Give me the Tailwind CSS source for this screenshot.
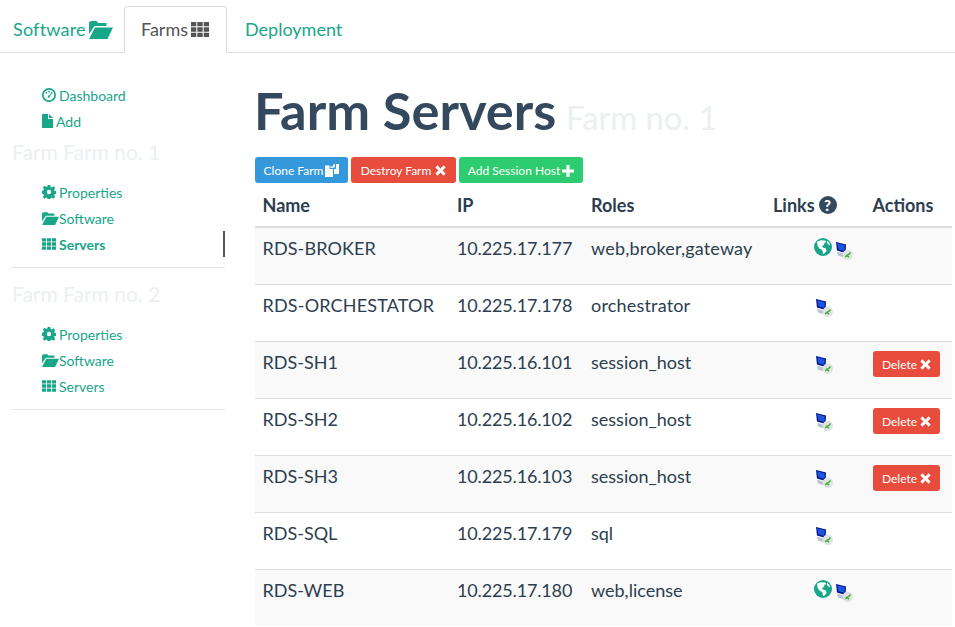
<!DOCTYPE html>
<html lang="en">
<head>
<meta charset="UTF-8">
<title>Farm Servers</title>
<script src="https://cdn.jsdelivr.net/npm/@tailwindcss/browser@4"></script>
</head>
<body class="bg-white font-['Lato',sans-serif] text-[18px] text-[#2c3e50] w-[955px] h-[627px] overflow-hidden">
<svg class="hidden">
  <symbol id="folder" viewBox="0 0 24 18"><path d="M2.500 0h5l1.500 2h8.500v3H5.500L0 13V2.500A2.500 2.500 0 0 1 2.500 0zM6 6.500h18L18.500 18H0z"/></symbol>
  <symbol id="grid" viewBox="0 0 18 15"><path d="M0 0h5.300v4.300H0zM6.350 0h5.300v4.300h-5.300zM12.700 0H18v4.300h-5.300zM0 5.350h5.300v4.300H0zM6.350 5.350h5.300v4.300h-5.300zM12.700 5.350H18v4.300h-5.300zM0 10.700h5.300V15H0zM6.350 10.700h5.300V15h-5.300zM12.700 10.700H18V15h-5.300z"/></symbol>
  <symbol id="times" viewBox="0 0 12 12"><path d="M2.600.4 6 3.800 9.400.4l2.200 2.200L8.200 6l3.400 3.400-2.200 2.200L6 8.200l-3.400 3.400-2.200-2.200L3.800 6 .4 2.600z"/></symbol>
  <symbol id="plus" viewBox="0 0 12 12"><path d="M4.400 0h3.200v4.400H12v3.200H7.600V12H4.400V7.600H0V4.400h4.400z"/></symbol>
  <symbol id="copy" viewBox="0 0 14 13"><path d="M0 1.500h4.500v3.500H8v8H0zM5.500 1.500 8 4H5.500zM9 0h1v3.500H7.500V2zM11 0h3v10H9V5h2z"/></symbol>
  <symbol id="file" viewBox="0 0 11 14"><path d="M0 0h6v5h5v9H0zM7 0l4 4H7z"/></symbol>
  <symbol id="gear" viewBox="0 0 14 14"><path fill-rule="evenodd" d="M5.700 0h2.600l.4 2 1 .4 1.700-1.100 1.800 1.800-1.100 1.700.4 1 2 .4v2.600l-2 .4-.4 1 1.100 1.700-1.800 1.800-1.700-1.100-1 .4-.4 1.800H5.700l-.4-1.800-1-.4-1.700 1.100-1.800-1.800 1.100-1.700-.4-1-1.500-.4V5.700l1.500-.4.4-1-1.100-1.700 1.800-1.800 1.700 1.100 1-.4zM7 4.800a2.200 2.200 0 1 0 0 4.400 2.200 2.200 0 0 0 0-4.400z"/></symbol>
  <symbol id="gauge" viewBox="0 0 14 14"><path fill-rule="evenodd" d="M7 0a7 7 0 1 1 0 14A7 7 0 0 1 7 0zm0 1.700a5.300 5.300 0 1 0 0 10.600A5.300 5.300 0 0 0 7 1.700z"/><circle cx="7" cy="3.600" r=".9"/><circle cx="4.300" cy="4.800" r=".9"/><circle cx="9.700" cy="4.800" r=".9"/><path d="M8.800 5.400l.7.500L7.800 8.200a1.100 1.100 0 1 1-.8-.6z"/></symbol>
  <symbol id="globe" viewBox="0 0 18 18"><circle cx="9" cy="9" r="9" fill="#18a689"/><path fill="#fff" d="M3 3.500 7 2.200l4 .3 1.500 1.500-2 .7-.5 2-2 1.500L9 9.500l3 1 .5 2.500-2.500 3-1-.5-.7-3.500-3-1.500L3.500 7.500zM13 2.800l2.500 2.200.6 2.500-1.600-1-1.500-1.500z"/></symbol>
  <symbol id="rdp" viewBox="0 0 18 18">
    <path fill="#b9c2cf" d="M2 9.500 9 12 9.500 15.500 3 13.500z"/>
    <path fill="#00108c" d="M1 0 11 2.500 10.500 11 2 8.500z"/>
    <path fill="#1f55dd" d="M2.200 1.200 9.800 3.200 9.400 9 3.200 7.200z"/>
    <circle cx="12.800" cy="12.800" r="5.200" fill="#dfe3e3"/>
    <path fill="none" stroke="#3fae2a" stroke-width="1.500" d="M10.300 15 12.600 12.600M15.500 10.500 13.200 13M14 15.200 12 13.500"/>
  </symbol>
</svg>

<nav class="h-[53px] pt-[6px] border-b border-[#ddd] flex text-[#18a689]">
  <a class="h-[47px] w-[124px] pl-[13px] flex items-center gap-[3px] tracking-[0.2px]">Software <svg class="w-[24px] h-[18px] fill-[#18a689]"><use href="#folder"/></svg></a>
  <a class="h-[47px] w-[103px] pl-[16px] bg-white border border-[#ddd] border-b-white rounded-t-[4px] flex items-center gap-[3px] text-[#555]">Farms <svg class="w-[18px] h-[15px] fill-[#555]"><use href="#grid"/></svg></a>
  <a class="h-[47px] pl-[18px] flex items-center">Deployment</a>
</nav>

<div class="flex">
  <aside class="w-[213px] ml-[12px] mt-[29px] text-[14px] text-[#18a689]">
    <ul class="pl-[30px]">
      <li class="h-[26px] flex items-center gap-[3px]"><svg class="w-[14px] h-[14px] fill-[#18a689]"><use href="#gauge"/></svg>Dashboard</li>
      <li class="h-[26px] flex items-center gap-[3px]"><svg class="w-[11px] h-[14px] fill-[#18a689]"><use href="#file"/></svg>Add</li>
    </ul>
    <h3 class="text-[21px] leading-[23px] text-[#ecf0f1] mt-[6px] mb-[16px]">Farm Farm no. 1</h3>
    <ul class="pb-[10px] border-b border-[#e5e5e5]">
      <li class="h-[26px] pl-[30px] flex items-center gap-[3px]"><svg class="w-[14px] h-[14px] fill-[#18a689]"><use href="#gear"/></svg>Properties</li>
      <li class="h-[26px] pl-[30px] flex items-center"><svg class="w-[17px] h-[13px] fill-[#18a689]"><use href="#folder"/></svg>Software</li>
      <li class="h-[26px] pl-[30px] flex items-center gap-[3px] font-bold border-r-2 border-[#555]"><svg class="w-[14px] h-[12px] fill-[#18a689]"><use href="#grid"/></svg>Servers</li>
    </ul>
    <h3 class="text-[21px] leading-[23px] text-[#ecf0f1] mt-[14px] mb-[16px]">Farm Farm no. 2</h3>
    <ul class="pb-[10px] border-b border-[#e5e5e5]">
      <li class="h-[26px] pl-[30px] flex items-center gap-[3px]"><svg class="w-[14px] h-[14px] fill-[#18a689]"><use href="#gear"/></svg>Properties</li>
      <li class="h-[26px] pl-[30px] flex items-center"><svg class="w-[17px] h-[13px] fill-[#18a689]"><use href="#folder"/></svg>Software</li>
      <li class="h-[26px] pl-[30px] flex items-center gap-[3px]"><svg class="w-[14px] h-[12px] fill-[#18a689]"><use href="#grid"/></svg>Servers</li>
    </ul>
  </aside>

  <main class="w-[697px] ml-[30px]">
    <h1 class="mt-[27px] -ml-[1px] h-[60px] leading-[60px] text-[52.4px] font-bold text-[#34495e] whitespace-nowrap">Farm Servers <small class="-ml-[3px] text-[32.7px] font-normal text-[#ecf0f1]">Farm no. 1</small></h1>
    <div class="mt-[17px] flex gap-[3px] text-[12px] text-white">
      <button class="h-[26px] w-[93px] pt-[1px] bg-[#3498db] rounded-[3px] flex items-center justify-center gap-[2px]">Clone Farm <svg class="w-[14px] h-[13px] fill-white"><use href="#copy"/></svg></button>
      <button class="h-[26px] w-[105px] pt-[1px] bg-[#e74c3c] rounded-[3px] flex items-center justify-center gap-[4px]">Destroy Farm <svg class="w-[11px] h-[11px] fill-white"><use href="#times"/></svg></button>
      <button class="h-[26px] w-[124px] pt-[1px] bg-[#2ecc71] rounded-[3px] flex items-center justify-center gap-[2px]">Add Session Host <svg class="w-[12px] h-[12px] fill-white"><use href="#plus"/></svg></button>
    </div>
    <table class="mt-[7px] w-[697px] table-fixed border-collapse text-left">
      <colgroup><col class="w-[194px]"><col class="w-[134px]"><col class="w-[182px]"><col class="w-[100px]"><col class="w-[87px]"></colgroup>
      <thead>
        <tr class="h-[37px] border-b-2 border-[#ddd]">
          <th class="pl-[7.5px] pb-[6px] font-bold">Name</th><th class="pl-[8px] pb-[6px] font-bold">IP</th><th class="pl-[8px] pb-[6px] font-bold">Roles</th>
          <th class="pl-[8px] pb-[6px] font-bold"><span class="flex items-center gap-[4px]">Links <span class="w-[18px] h-[18px] rounded-full bg-[#34495e] text-white text-[15px] font-black leading-[18px] text-center">?</span></span></th>
          <th class="pl-[7.5px] pb-[6px] font-bold">Actions</th>
        </tr>
      </thead>
      <tbody>
        <tr class="h-[57px] border-b border-[#ddd] bg-[#f9f9f9]">
          <td class="pl-[7.5px] pb-[14px] tracking-[0.12px]">RDS-BROKER</td><td class="pl-[8px] pb-[14px] tracking-[-0.15px]">10.225.17.177</td><td class="pl-[8px] pb-[14px] tracking-[0.18px]">web,broker,gateway</td>
          <td class="pb-[18px]"><span class="flex items-center pl-[49px] gap-[3px]"><svg class="w-[18px] h-[18px]"><use href="#globe"/></svg><svg class="w-[18px] h-[18px] mt-[8px]"><use href="#rdp"/></svg></span></td><td></td>
        </tr>
        <tr class="h-[57px] border-b border-[#ddd]">
          <td class="pl-[7.5px] pb-[14px] tracking-[0.18px]">RDS-ORCHESTATOR</td><td class="pl-[8px] pb-[14px] tracking-[-0.15px]">10.225.17.178</td><td class="pl-[8px] pb-[14px] tracking-[0.18px]">orchestrator</td>
          <td class="pb-[18px]"><span class="flex items-center pl-[50px]"><svg class="w-[18px] h-[18px] mt-[8px]"><use href="#rdp"/></svg></span></td><td></td>
        </tr>
        <tr class="h-[57px] border-b border-[#ddd] bg-[#f9f9f9]">
          <td class="pl-[7.5px] pb-[14px]">RDS-SH1</td><td class="pl-[8px] pb-[14px] tracking-[-0.15px]">10.225.16.101</td><td class="pl-[8px] pb-[14px]">session_host</td>
          <td class="pb-[18px]"><span class="flex items-center pl-[50px]"><svg class="w-[18px] h-[18px] mt-[8px]"><use href="#rdp"/></svg></span></td>
          <td class="pl-[8px] pb-[12px]"><button class="h-[26px] w-[67px] pt-[2px] bg-[#e74c3c] rounded-[3px] text-white text-[12px] flex items-center justify-center gap-[3px]">Delete <svg class="w-[11px] h-[11px] fill-white"><use href="#times"/></svg></button></td>
        </tr>
        <tr class="h-[57px] border-b border-[#ddd]">
          <td class="pl-[7.5px] pb-[14px]">RDS-SH2</td><td class="pl-[8px] pb-[14px] tracking-[-0.15px]">10.225.16.102</td><td class="pl-[8px] pb-[14px]">session_host</td>
          <td class="pb-[18px]"><span class="flex items-center pl-[50px]"><svg class="w-[18px] h-[18px] mt-[8px]"><use href="#rdp"/></svg></span></td>
          <td class="pl-[8px] pb-[12px]"><button class="h-[26px] w-[67px] pt-[2px] bg-[#e74c3c] rounded-[3px] text-white text-[12px] flex items-center justify-center gap-[3px]">Delete <svg class="w-[11px] h-[11px] fill-white"><use href="#times"/></svg></button></td>
        </tr>
        <tr class="h-[57px] border-b border-[#ddd] bg-[#f9f9f9]">
          <td class="pl-[7.5px] pb-[14px]">RDS-SH3</td><td class="pl-[8px] pb-[14px] tracking-[-0.15px]">10.225.16.103</td><td class="pl-[8px] pb-[14px]">session_host</td>
          <td class="pb-[18px]"><span class="flex items-center pl-[50px]"><svg class="w-[18px] h-[18px] mt-[8px]"><use href="#rdp"/></svg></span></td>
          <td class="pl-[8px] pb-[12px]"><button class="h-[26px] w-[67px] pt-[2px] bg-[#e74c3c] rounded-[3px] text-white text-[12px] flex items-center justify-center gap-[3px]">Delete <svg class="w-[11px] h-[11px] fill-white"><use href="#times"/></svg></button></td>
        </tr>
        <tr class="h-[57px] border-b border-[#ddd]">
          <td class="pl-[7.5px] pb-[14px]">RDS-SQL</td><td class="pl-[8px] pb-[14px] tracking-[-0.15px]">10.225.17.179</td><td class="pl-[8px] pb-[14px]">sql</td>
          <td class="pb-[18px]"><span class="flex items-center pl-[50px]"><svg class="w-[18px] h-[18px] mt-[8px]"><use href="#rdp"/></svg></span></td><td></td>
        </tr>
        <tr class="h-[57px] bg-[#f9f9f9]">
          <td class="pl-[7.5px] pb-[14px]">RDS-WEB</td><td class="pl-[8px] pb-[14px] tracking-[-0.15px]">10.225.17.180</td><td class="pl-[8px] pb-[14px]">web,license</td>
          <td class="pb-[18px]"><span class="flex items-center pl-[49px] gap-[3px]"><svg class="w-[18px] h-[18px]"><use href="#globe"/></svg><svg class="w-[18px] h-[18px] mt-[8px]"><use href="#rdp"/></svg></span></td><td></td>
        </tr>
      </tbody>
    </table>
  </main>
</div>
</body>
</html>
